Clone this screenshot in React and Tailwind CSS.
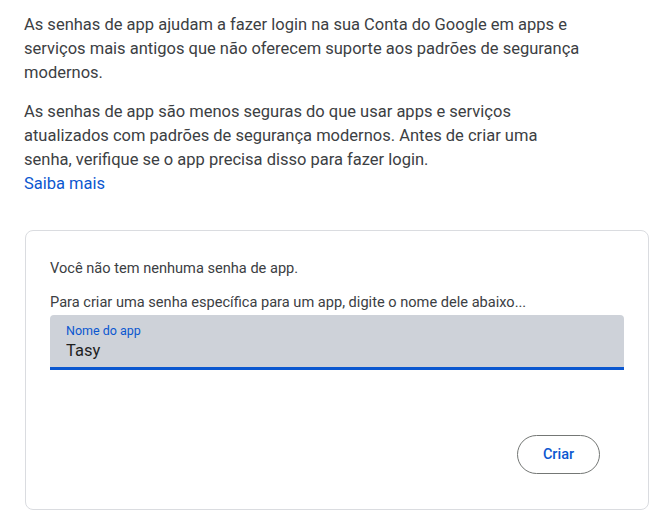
import React, { useState } from "react";

const App = () => {
  const [appName, setAppName] = useState("Tasy");

  return (
    <div
      className="w-[662px] h-[520px] bg-white text-[#3c4043] overflow-hidden"
      style={{ fontFamily: "Roboto, 'Liberation Sans', sans-serif" }}
    >
      <div className="pl-6 pt-[13px]">
        <p className="w-[561px] text-[16.5px] leading-6">
          As senhas de app ajudam a fazer login na sua Conta do Google em apps e serviços mais
          antigos que não oferecem suporte aos padrões de segurança modernos.
        </p>
        <p className="w-[561px] text-[16.5px] leading-6 mt-[15px]">
          As senhas de app são menos seguras do que usar apps e serviços atualizados com padrões
          de segurança modernos. Antes de criar uma senha, verifique se o app precisa disso para
          fazer login.
        </p>
        <a href="#" className="block text-[16.5px] leading-6 text-[#0b57d0] w-fit">
          Saiba mais
        </a>
      </div>

      {/* card */}
      <div className="ml-[25px] mt-[34px] w-[624px] h-[280px] border border-[#dadce0] rounded-lg px-6 pt-[27px]">
        <p className="text-[14.6px] leading-5">Você não tem nenhuma senha de app.</p>
        <p className="text-[14.6px] leading-5 mt-[14px]">
          Para criar uma senha específica para um app, digite o nome dele abaixo...
        </p>
        <div className="mt-[3px] w-[574px] h-[55px] bg-[#ced2d9] rounded-t border-b-[3px] border-[#0b57d0] px-4 pt-[8px]">
          <label className="block text-[12.5px] leading-4 text-[#0b57d0]">Nome do app</label>
          <input
            autoFocus
            value={appName}
            onChange={(e) => setAppName(e.target.value)}
            className="w-full bg-transparent outline-none text-[16.5px] leading-6 text-[#1f1f1f] caret-[#0b57d0]"
          />
        </div>
        <div className="flex justify-end mt-[65px] pr-[24px]">
          <button className="w-[83px] h-[39px] rounded-full border border-[#747775] text-[14.5px] font-medium text-[#0b57d0]">
            Criar
          </button>
        </div>
      </div>
    </div>
  );
};

export default App;
